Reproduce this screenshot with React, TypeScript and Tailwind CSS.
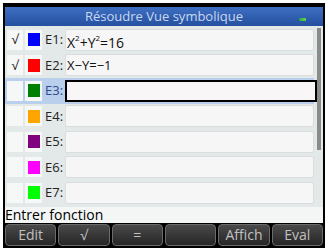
import React from "react";

const rows = [
  { id: "E1", color: "bg-[#0000ff]", checked: true, expr: "sup" },
  { id: "E2", color: "bg-[#ff0000]", checked: true, expr: "X−Y=−1" },
  { id: "E3", color: "bg-[#008000]", checked: false, expr: "", selected: true },
  { id: "E4", color: "bg-[#ffa500]", checked: false, expr: "" },
  { id: "E5", color: "bg-[#800080]", checked: false, expr: "" },
  { id: "E6", color: "bg-[#ff00ff]", checked: false, expr: "" },
  { id: "E7", color: "bg-[#00ff00]", checked: false, expr: "" },
];

const keys = ["Edit", "√", "=", "", "Affich", "Eval"];

function Expr({ expr }: { expr: string }) {
  if (expr === "sup") {
    return (
      <span className="text-[14px] leading-none pt-[7px]">
        X<sup className="text-[8px] relative -top-[7px] align-baseline">2</sup>+Y
        <sup className="text-[8px] relative -top-[7px] align-baseline">2</sup>=16
      </span>
    );
  }
  return <span className="text-[13px]">{expr}</span>;
}

export default function App() {
  return (
    <div
      className="w-[328px] h-[251px] bg-white p-[3px]"
      style={{ fontFamily: '"Open Sans", "Noto Sans", sans-serif' }}
    >
      <div className="h-full bg-black pt-[4px] px-[2px] pb-[2px] flex flex-col">
        {/* title */}
        <div className="h-[19px] shrink-0 bg-gradient-to-b from-[#3f6fc2] to-[#24509f] flex items-center justify-center relative">
          <span className="text-[13px] text-[#c9d8f0] leading-none">Résoudre Vue symbolique</span>
          <div className="absolute right-[17px] top-[11px] w-[7px] h-[3px] bg-gradient-to-r from-[#2f9f3f] to-[#5fdf4f] rounded-[1px]" />
        </div>

        {/* list */}
        <div className="h-[181px] shrink-0 bg-[#e3e8e8] flex overflow-hidden">
          <div className="flex-1 flex flex-col pt-[1px]">
            {rows.map((r) => (
              <div
                key={r.id}
                className={`h-[25.5px] shrink-0 flex items-center ${r.selected ? "bg-[#b9cfec]" : ""}`}
              >
                <div className="w-[16px] h-[20px] ml-[2px] bg-[#f6f7f7] flex items-center justify-center text-[13px] text-[#222] leading-none">
                  {r.checked ? "√" : ""}
                </div>
                <div className="w-[17px] h-[20px] ml-[2px] bg-[#f6f7f7] flex items-center justify-center">
                  <div className={`w-[12px] h-[13px] ${r.color}`} />
                </div>
                <span
                  className={`ml-[3px] w-[20px] text-[13px] leading-none ${r.selected ? "text-[#2a4a8a]" : "text-[#222]"}`}
                >
                  {r.id}:
                </span>
                <div
                  className={`flex-1 h-[22px] flex items-center pl-[1px] text-[#111] ${
                    r.selected
                      ? "border-2 border-black bg-[#f8f6f6] mr-[-3px]"
                      : "border border-[#d9dddd] bg-[#f6f6f6] rounded-[2px]"
                  }`}
                >
                  <Expr expr={r.expr} />
                </div>
              </div>
            ))}
          </div>
          <div className="w-[4px] ml-[3px] mr-[2px] mt-[2px] flex flex-col">
            <div className="h-[122px] bg-[#8a8c8c]" />
          </div>
        </div>

        {/* status */}
        <div className="h-[16px] shrink-0 bg-[#f4f6f6] flex items-center">
          <span className="text-[14px] text-black leading-none">Entrer fonction</span>
        </div>

        {/* softkeys */}
        <div className="flex-1 flex gap-[2px] pt-[1px]">
          {keys.map((k, i) => (
            <div
              key={i}
              className="flex-1 rounded-[4px] border border-[#6a6a6a] bg-gradient-to-b from-[#4a4a4a] to-[#262626] flex items-center justify-center"
            >
              <span className="text-[14px] text-[#c0c0c0] leading-none">{k}</span>
            </div>
          ))}
        </div>
      </div>
    </div>
  );
}
